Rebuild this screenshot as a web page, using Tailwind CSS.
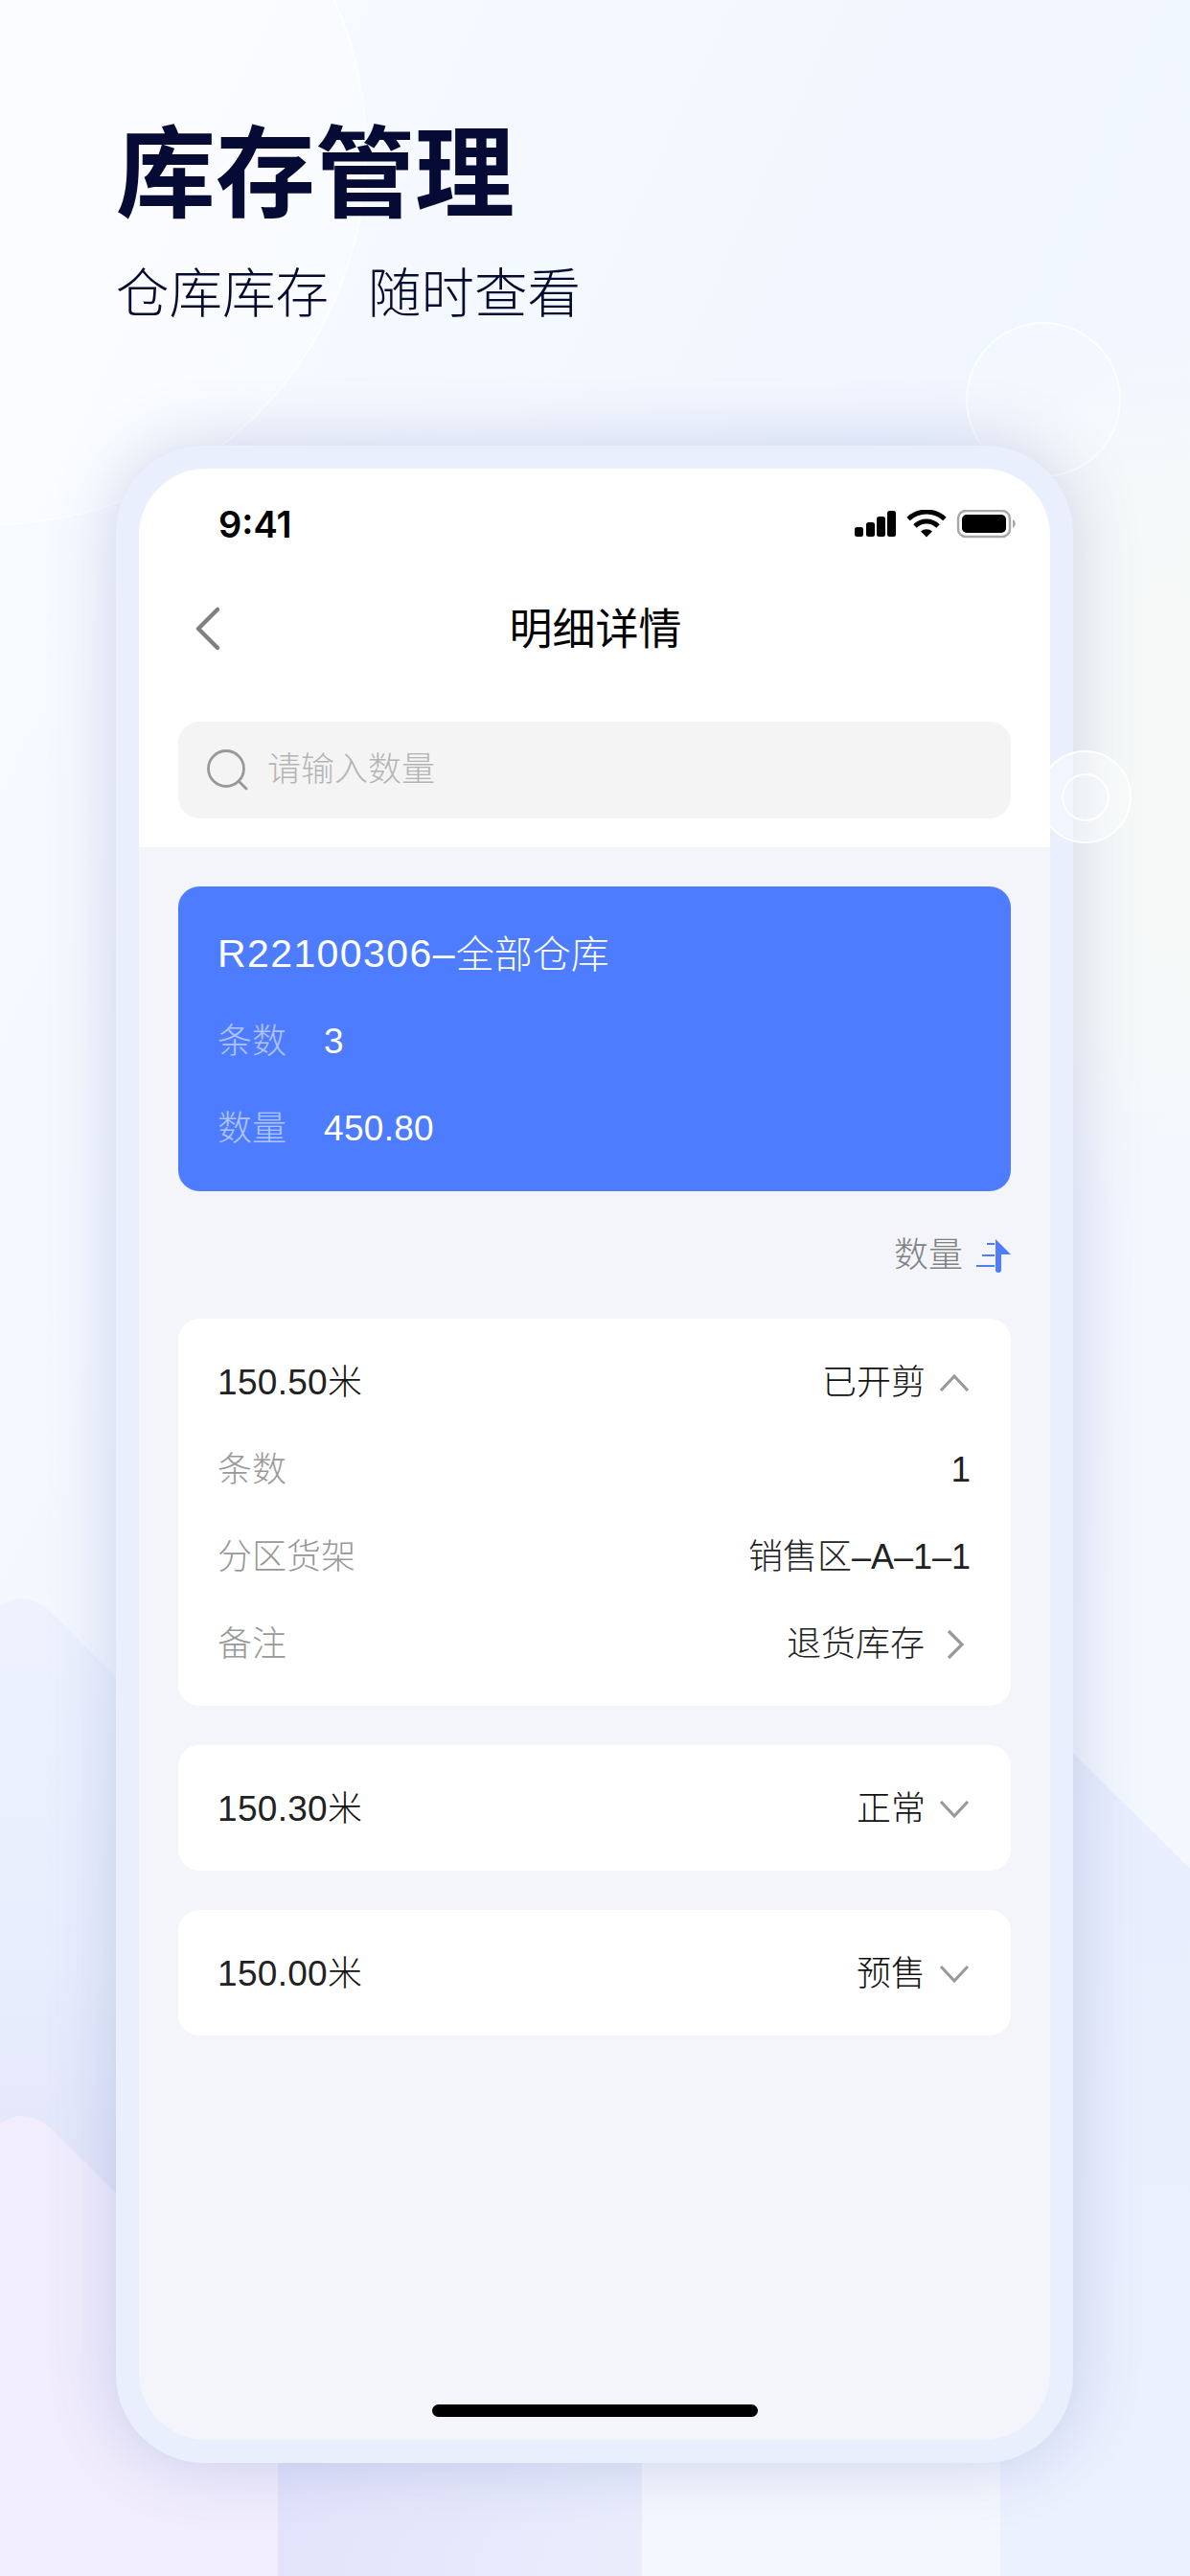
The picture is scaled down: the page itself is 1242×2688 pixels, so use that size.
<!DOCTYPE html>
<html><head><meta charset="utf-8"><script src="https://cdn.jsdelivr.net/npm/@tailwindcss/browser@4"></script></head>
<body>
<div class="relative w-[1242px] h-[2688px] overflow-hidden bg-gradient-to-br from-[#f9fbff] via-[#f0f6ff] to-[#f6f8fe] pt-[114px] [font-family:'Liberation_Sans','Noto_Sans_CJK_SC',sans-serif]">
  <svg class="absolute left-0 top-0" width="1242" height="2688" viewBox="0 0 1242 2688" fill="none">
    <defs>
      <linearGradient id="m1" x1="0" y1="1670" x2="0" y2="2300" gradientUnits="userSpaceOnUse"><stop offset="0" stop-color="#edf2fe"/><stop offset="0.6" stop-color="#e8eefd"/><stop offset="1" stop-color="#e2e5fa"/></linearGradient>
      <linearGradient id="s1" x1="290" y1="2570" x2="670" y2="2688" gradientUnits="userSpaceOnUse"><stop offset="0" stop-color="#e2e3fb"/><stop offset="1" stop-color="#e9eefc"/></linearGradient>
      <linearGradient id="r1" x1="1242" y1="1850" x2="1242" y2="2688" gradientUnits="userSpaceOnUse"><stop offset="0" stop-color="#e8eefd"/><stop offset="1" stop-color="#ecf1fe"/></linearGradient>
      <radialGradient id="rt" cx="1242" cy="800" r="480" gradientUnits="userSpaceOnUse"><stop offset="0" stop-color="#f6f9f7"/><stop offset="0.6" stop-color="#f6f9f9"/><stop offset="1" stop-color="#f6f9fd" stop-opacity="0"/></radialGradient>
    </defs>
    <rect x="700" y="300" width="542" height="1000" fill="url(#rt)"/>
    <circle cx="-8" cy="157" r="390" fill="#ffffff" fill-opacity="0.35" stroke="#ffffff" stroke-opacity="0.75" stroke-width="2"/>
    <circle cx="1089" cy="417" r="80" fill="#ffffff" fill-opacity="0.2" stroke="#ffffff" stroke-opacity="0.8" stroke-width="2"/>
    <path d="M0 1676Q12 1668 22 1668Q38 1668 52 1681L300 1930V2688H0Z" fill="url(#m1)"/>
    <path d="M0 2216Q12 2208 22 2208Q38 2208 52 2220L300 2466V2688H0Z" fill="#f1edfd"/>
    <path d="M1044 1754L1242 1950V2688H1044Z" fill="url(#r1)"/>
    <rect x="290" y="2500" width="380" height="188" fill="url(#s1)"/>
    <rect x="670" y="2500" width="374" height="188" fill="#f4f7fe"/>
  </svg>
  <div class="relative ml-[121px]">
    <h1 class="text-[104px] leading-[120px] font-bold text-[#060b35] [font-family:'Noto_Sans_CJK_SC',sans-serif]">库存管理</h1>
    <p class="mt-[33px] flex gap-[41px] text-[55.5px] leading-[70px] font-light text-[#050a30] [font-family:'Noto_Sans_CJK_SC',sans-serif]"><span>仓库库存</span><span>随时查看</span></p>
  </div>
  <div class="relative ml-[121px] mt-[128px] w-[999px] h-[2105px] rounded-[92px] bg-[#e9effd] p-[24px] shadow-[0_0_70px_rgba(70,95,170,0.24)]">
    <div class="flex h-full flex-col overflow-hidden rounded-[70px] bg-[#f3f5fa]">
      <div class="bg-white pb-[30px]">
        <div class="flex h-[116px] items-center justify-between pl-[83px] pr-[34px]">
          <span class="text-[38px] font-semibold text-black [font-family:'Inter',sans-serif]">9:41</span>
          <svg width="170" height="30" viewBox="0 0 170 30">
            <rect x="0" y="18" width="9" height="10" rx="2.5" fill="#000"/>
            <rect x="12" y="13" width="9" height="15" rx="2.5" fill="#000"/>
            <rect x="23" y="7" width="9" height="21" rx="2.5" fill="#000"/>
            <rect x="34" y="1" width="9" height="27" rx="2.5" fill="#000"/>
            <path d="M56 9.5a28 28 0 0 1 38 0" stroke="#000" stroke-width="5" fill="none"/>
            <path d="M63 17a17 17 0 0 1 24 0" stroke="#000" stroke-width="5" fill="none"/>
            <path d="M69 22.5a9 9 0 0 1 12 0L75 28.5Z" fill="#000"/>
            <rect x="108" y="1" width="54" height="27" rx="8" fill="none" stroke="#a8a8a8" stroke-width="2.5"/>
            <rect x="112" y="5" width="46" height="19" rx="5" fill="#000"/>
            <path d="M165 10a5 5 0 0 1 0 9Z" fill="#a8a8a8"/>
          </svg>
        </div>
        <div class="relative flex h-[100px] items-center justify-center">
          <svg class="absolute left-[57px] top-[28px]" width="28" height="46" viewBox="0 0 28 46" fill="none"><path d="M25 3L5 23L25 43" stroke="#808080" stroke-width="4.5" stroke-linecap="round" stroke-linejoin="round"/></svg>
          <span class="ml-[2px] mt-[5px] text-[45px] font-normal text-black">明细详情</span>
        </div>
        <div class="mx-[41px] mt-[48px] flex h-[101px] items-center rounded-[22px] bg-[#f4f4f4] pl-[29px]">
          <svg width="44" height="44" viewBox="0 0 44 44" fill="none"><circle cx="21" cy="20" r="18.5" stroke="#999" stroke-width="2.8"/><path d="M34 33L42 41" stroke="#999" stroke-width="2.8" stroke-linecap="round"/></svg>
          <span class="ml-[20px] text-[35px] font-light text-[#b4b4b4]">请输入数量</span>
        </div>
      </div>
      <div class="flex flex-1 flex-col px-[41px] pt-[41px]">
        <div class="rounded-[22px] bg-[#4d7cff] px-[41px] pb-[20px] pt-[25px] text-[36px] font-light text-white">
          <div class="flex h-[91px] items-center text-[40px]"><span class="text-[41px] tracking-[1.4px]">R22100306–</span><span>全部仓库</span></div>
          <div class="flex h-[91px] items-center"><span class="w-[111px] text-white/55">条数</span><span class="text-[37px] tracking-[0.3px]">3</span></div>
          <div class="flex h-[91px] items-center"><span class="w-[111px] text-white/55">数量</span><span class="text-[37px] tracking-[0.3px]">450.80</span></div>
        </div>
        <div class="flex h-[133px] items-center justify-end text-[36px] font-light text-[#808080]">
          <span>数量</span>
          <svg class="ml-[14px]" width="36" height="36" viewBox="0 0 36 36" fill="none"><path d="M20 1L36 17H26V33a3 3 0 0 1-6 0Z" fill="#4d7cff"/><path d="M11 6H19M6 18H19M0 29H19" stroke="#4d7cff" stroke-width="2.2"/></svg>
        </div>
        <div class="flex flex-col gap-[41px]">
          <div class="rounded-[22px] bg-white px-[41px] pb-[19px] pt-[21px] text-[36px] font-light text-[#111]">
            <div class="flex h-[91px] items-center justify-between"><span><span class="text-[37px] tracking-[0.3px] text-[#222]">150.50</span>米</span><span class="flex items-center">已开剪<svg class="ml-[14px] mr-[2px]" width="32" height="20" viewBox="0 0 32 20" fill="none"><path d="M2 18L16 3L30 18" stroke="#999" stroke-width="3.200"/></svg></span></div>
            <div class="flex h-[91px] items-center justify-between"><span class="text-[#999]">条数</span><span class="mr-[1px] text-[37px] text-[#222]">1</span></div>
            <div class="flex h-[91px] items-center justify-between"><span class="text-[#999]">分区货架</span><span class="mr-[1px] text-[#222]">销售区–A–1–1</span></div>
            <div class="flex h-[91px] items-center justify-between"><span class="text-[#999]">备注</span><span class="flex items-center text-[#222]">退货库存<svg class="ml-[22px] mr-[7px]" width="20" height="32" viewBox="0 0 20 32" fill="none"><path d="M3 2L17 16L3 30" stroke="#999" stroke-width="3.200"/></svg></span></div>
          </div>
          <div class="flex h-[131px] items-center justify-between rounded-[22px] bg-white px-[41px] pt-[2px] text-[36px] font-light text-[#111]"><span><span class="text-[37px] tracking-[0.3px] text-[#222]">150.30</span>米</span><span class="flex items-center">正常<svg class="ml-[14px] mr-[2px]" width="32" height="20" viewBox="0 0 32 20" fill="none"><path d="M2 2L16 17L30 2" stroke="#999" stroke-width="3.200"/></svg></span></div>
          <div class="flex h-[131px] items-center justify-between rounded-[22px] bg-white px-[41px] pt-[2px] text-[36px] font-light text-[#111]"><span><span class="text-[37px] tracking-[0.3px] text-[#222]">150.00</span>米</span><span class="flex items-center">预售<svg class="ml-[14px] mr-[2px]" width="32" height="20" viewBox="0 0 32 20" fill="none"><path d="M2 2L16 17L30 2" stroke="#999" stroke-width="3.200"/></svg></span></div>
        </div>
        <div class="mb-[24px] mt-auto h-[13px] w-[340px] self-center rounded-full bg-black"></div>
      </div>
    </div>
    <div class="absolute left-[963px] top-[318px] flex h-[97px] w-[97px] items-center justify-center rounded-full border-2 border-white bg-white/40">
      <div class="h-[50px] w-[50px] rounded-full border-2 border-white"></div>
    </div>
  </div>
</div>
</body></html>
